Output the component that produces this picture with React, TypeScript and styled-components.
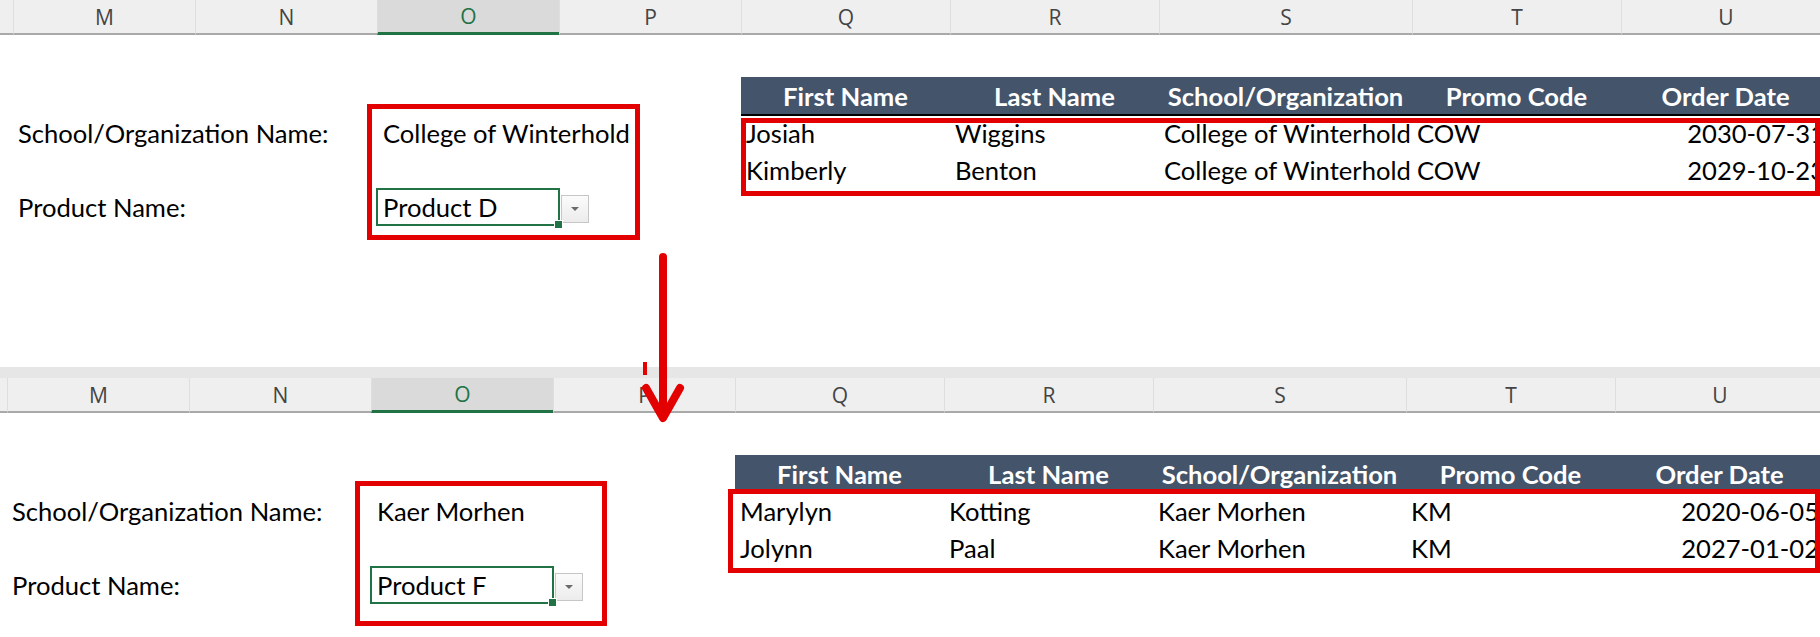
import React from "react";
import styled, { createGlobalStyle } from "styled-components";

const GlobalStyle = createGlobalStyle`
  html, body { margin: 0; padding: 0; background: #ffffff; overflow: hidden; }
  body { width: 1820px; height: 637px; }
`;

const BODY_FONT = `"Lato", "Liberation Sans", sans-serif`;
const BODY_SIZE = 25.6;

type Box = { top: number; left: number; width: number; height: number };

interface SheetData {
  stub: number;
  bodyHeight: number;
  strip: boolean;
  school: string;
  product: string;
  formBox: Box;
  tableBox: Box;
  rows: { first: string; last: string; org: string; promo: string; date: string }[];
}

const SHEETS: SheetData[] = [
  {
    stub: 13,
    bodyHeight: 332,
    strip: false,
    school: "College of Winterhold",
    product: "Product D",
    formBox: { top: 69, left: 354, width: 273, height: 136 },
    tableBox: { top: 2, left: 0, width: 1079, height: 78 },
    rows: [
      { first: "Josiah", last: "Wiggins", org: "College of Winterhold", promo: "COW", date: "2030-07-31" },
      { first: "Kimberly", last: "Benton", org: "College of Winterhold", promo: "COW", date: "2029-10-23" },
    ],
  },
  {
    stub: 7,
    bodyHeight: 224,
    strip: true,
    school: "Kaer Morhen",
    product: "Product F",
    formBox: { top: 68, left: 348, width: 252, height: 145 },
    tableBox: { top: -5, left: -7, width: 1092, height: 84 },
    rows: [
      { first: "Marylyn", last: "Kotting", org: "Kaer Morhen", promo: "KM", date: "2020-06-05" },
      { first: "Jolynn", last: "Paal", org: "Kaer Morhen", promo: "KM", date: "2027-01-02" },
    ],
  },
];

const LETTERS = ["M", "N", "O", "P", "Q", "R", "S", "T", "U"];
const SHEET_COLS = "182px 182px 182px 182px 209px 209px 253px 209px 209px";
const TABLE_COLS = "209px 209px 253px 209px 209px";

const Page = styled.div`
  position: relative;
  width: 1820px;
  height: 637px;
  overflow: hidden;
  background: #ffffff;
`;

const Sheet = styled.section`
  display: flex;
  flex-direction: column;
`;

const Strip = styled.div`
  height: 11px;
  background: #e6e6e6;
`;

const ColumnHeader = styled.div<{ $stub: number }>`
  display: grid;
  grid-template-columns: ${(p) => p.$stub}px ${SHEET_COLS};
  height: 35px;
  background: #efefef;
`;

const HeaderStub = styled.div`
  border-bottom: 2px solid #a9a9a9;
`;

const ColumnCell = styled.div<{ $selected?: boolean }>`
  display: flex;
  align-items: center;
  justify-content: center;
  font-family: "Open Sans", "Noto Sans", sans-serif;
  font-size: 21px;
  color: ${(p) => (p.$selected ? "#217346" : "#444444")};
  background: ${(p) => (p.$selected ? "#dadada" : "#efefef")};
  border-left: 1px solid #dedede;
  border-bottom: ${(p) => (p.$selected ? "3px solid #217346" : "2px solid #a9a9a9")};
  box-sizing: border-box;
`;

const SheetBody = styled.div<{ $stub: number; $height: number }>`
  display: grid;
  grid-template-columns: ${(p) => p.$stub}px 728px 1089px;
  height: ${(p) => p.$height}px;
`;

const FormArea = styled.div`
  grid-column: 2;
  position: relative;
  display: grid;
  grid-template-columns: 364px 364px;
  grid-auto-rows: 38px;
  row-gap: 36px;
  padding-top: 79px;
  align-content: start;
`;

const Label = styled.div`
  display: flex;
  align-items: center;
  padding-left: 5px;
  font-family: ${BODY_FONT};
  font-size: ${BODY_SIZE}px;
  color: #000000;
  white-space: nowrap;
`;

const Value = styled(Label)`
  padding-left: 6px;
`;

const DropdownRow = styled.div`
  display: flex;
  align-items: flex-end;
`;

const SelectedCell = styled.div`
  position: relative;
  box-sizing: border-box;
  width: 184px;
  height: 38px;
  margin-left: -1px;
  border: 2px solid #217346;
  display: flex;
  align-items: center;
  padding-left: 5px;
  font-family: ${BODY_FONT};
  font-size: ${BODY_SIZE}px;
  color: #000000;
`;

const FillHandle = styled.span`
  position: absolute;
  right: -5px;
  bottom: -5px;
  width: 7px;
  height: 7px;
  background: #217346;
  border: 1px solid #ffffff;
`;

const DropButton = styled.div`
  box-sizing: border-box;
  width: 28px;
  height: 28px;
  margin: 0 0 3px 1px;
  border: 1px solid #c6c6c6;
  background: linear-gradient(#fbfbfb, #ececec);
  display: flex;
  align-items: center;
  justify-content: center;
`;

const Highlight = styled.div`
  position: absolute;
  box-sizing: border-box;
  border: 5px solid #e30000;
  pointer-events: none;
`;

const TableArea = styled.div`
  grid-column: 3;
  padding-top: 42px;
`;

const TableHeader = styled.div`
  display: grid;
  grid-template-columns: ${TABLE_COLS};
  height: 39px;
  box-sizing: border-box;
  background: #44546a;
  border-bottom: 2px solid #000000;
`;

const HeaderCell = styled.div`
  display: flex;
  align-items: center;
  justify-content: center;
  font-family: ${BODY_FONT};
  font-size: ${BODY_SIZE}px;
  font-weight: 700;
  color: #ffffff;
  white-space: nowrap;
`;

const Rows = styled.div`
  position: relative;
`;

const Row = styled.div`
  display: grid;
  grid-template-columns: ${TABLE_COLS};
  height: 37px;
`;

const DataCell = styled.div<{ $right?: boolean }>`
  display: flex;
  align-items: center;
  justify-content: ${(p) => (p.$right ? "flex-end" : "flex-start")};
  box-sizing: border-box;
  padding: 0 5px 4px 5px;
  font-family: ${BODY_FONT};
  font-size: ${BODY_SIZE}px;
  color: #000000;
  white-space: nowrap;
  overflow: visible;
  min-width: 0;
`;

const ArrowSvg = styled.svg`
  position: absolute;
  left: 640px;
  top: 245px;
`;

const HEAD_LABELS = ["First Name", "Last Name", "School/Organization", "Promo Code", "Order Date"];

function SheetView({ s }: { s: SheetData }) {
  return (
    <Sheet>
      {s.strip && <Strip />}
      <ColumnHeader $stub={s.stub}>
        <HeaderStub />
        {LETTERS.map((l) => (
          <ColumnCell key={l} $selected={l === "O"}>
            {l}
          </ColumnCell>
        ))}
      </ColumnHeader>
      <SheetBody $stub={s.stub} $height={s.bodyHeight}>
        <FormArea>
          <Label>School/Organization Name:</Label>
          <Value>{s.school}</Value>
          <Label>Product Name:</Label>
          <DropdownRow>
            <SelectedCell>
              {s.product}
              <FillHandle />
            </SelectedCell>
            <DropButton>
              <svg width="10" height="6" viewBox="0 0 10 6">
                <path d="M1 1h8L5 5z" fill="#6a6a6a" />
              </svg>
            </DropButton>
          </DropdownRow>
          <Highlight style={{ ...s.formBox }} />
        </FormArea>
        <TableArea>
          <TableHeader>
            {HEAD_LABELS.map((h) => (
              <HeaderCell key={h}>{h}</HeaderCell>
            ))}
          </TableHeader>
          <Rows>
            {s.rows.map((r) => (
              <Row key={r.first}>
                <DataCell>{r.first}</DataCell>
                <DataCell>{r.last}</DataCell>
                <DataCell>{r.org}</DataCell>
                <DataCell>{r.promo}</DataCell>
                <DataCell $right>{r.date}</DataCell>
              </Row>
            ))}
            <Highlight style={{ ...s.tableBox }} />
          </Rows>
        </TableArea>
      </SheetBody>
    </Sheet>
  );
}

export default function App() {
  return (
    <>
      <GlobalStyle />
      <Page>
        {SHEETS.map((s, i) => (
          <SheetView key={i} s={s} />
        ))}
        <ArrowSvg width="50" height="185" viewBox="0 0 50 185">
          <rect x="3" y="117" width="4" height="13" fill="#e30000" />
          <path
            d="M23 12V172M6 143L23 173L40 143"
            fill="none"
            stroke="#e30000"
            strokeWidth="8"
            strokeLinecap="round"
            strokeLinejoin="round"
          />
        </ArrowSvg>
      </Page>
    </>
  );
}
